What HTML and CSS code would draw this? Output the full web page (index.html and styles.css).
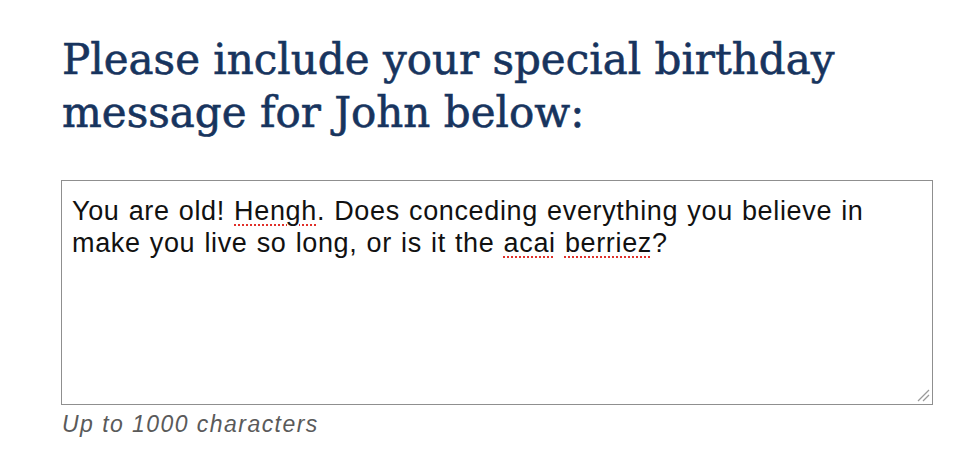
FILE: index.html
```html
<!DOCTYPE html>
<html lang="en">
<head>
<meta charset="utf-8">
<title>Birthday message</title>
<link rel="stylesheet" href="styles.css">
</head>
<body>
<main class="form">
  <h1 class="title">Please include your special birthday<br>message for John below:</h1>
  <div class="field">
    <div class="textbox">You are old! <span class="misspelled">Hengh</span>. Does conceding everything you believe in<br>make you live so long, or is it the <span class="misspelled">acai</span> <span class="misspelled">berriez</span>?</div>
    <svg class="grip" width="14" height="14" viewBox="0 0 14 14" aria-hidden="true">
      <line x1="2" y1="13" x2="13" y2="2" stroke="#9a9a9a" stroke-width="1.2"/>
      <line x1="7" y1="13" x2="13" y2="7" stroke="#9a9a9a" stroke-width="1.2"/>
    </svg>
  </div>
  <p class="hint">Up to 1000 characters</p>
</main>
</body>
</html>
```

FILE: styles.css
```css
html, body {
  margin: 0;
  padding: 0;
  background: #ffffff;
}

.form {
  padding: 33px 0 0 61px;
  width: 872px;
}

.title {
  margin: 0 0 0 1px;
  font-family: "DejaVu Serif", Georgia, serif;
  font-weight: normal;
  font-size: 42px;
  line-height: 53px;
  color: #17345e;
  -webkit-text-stroke: 0.6px #17345e;
  white-space: nowrap;
}

.field {
  position: relative;
  margin-top: 41px;
}

.textbox {
  box-sizing: border-box;
  width: 872px;
  height: 225px;
  border: 1px solid #8f8f8f;
  padding: 14px 10px 10px 10px;
  font-family: "Liberation Sans", Arial, sans-serif;
  font-size: 27px;
  line-height: 32px;
  letter-spacing: 0.65px;
  word-spacing: 1px;
  color: #111111;
  background: #ffffff;
  white-space: nowrap;
}

.misspelled {
  text-decoration: underline dotted #e0302a;
  text-decoration-thickness: 2px;
  text-underline-offset: 4px;
}

.grip {
  position: absolute;
  right: 3px;
  bottom: 3px;
}

.hint {
  margin: 6px 0 0 1px;
  font-family: "Liberation Sans", Arial, sans-serif;
  font-style: italic;
  font-size: 23px;
  line-height: 26px;
  letter-spacing: 1.45px;
  color: #5a5a5a;
}
```
